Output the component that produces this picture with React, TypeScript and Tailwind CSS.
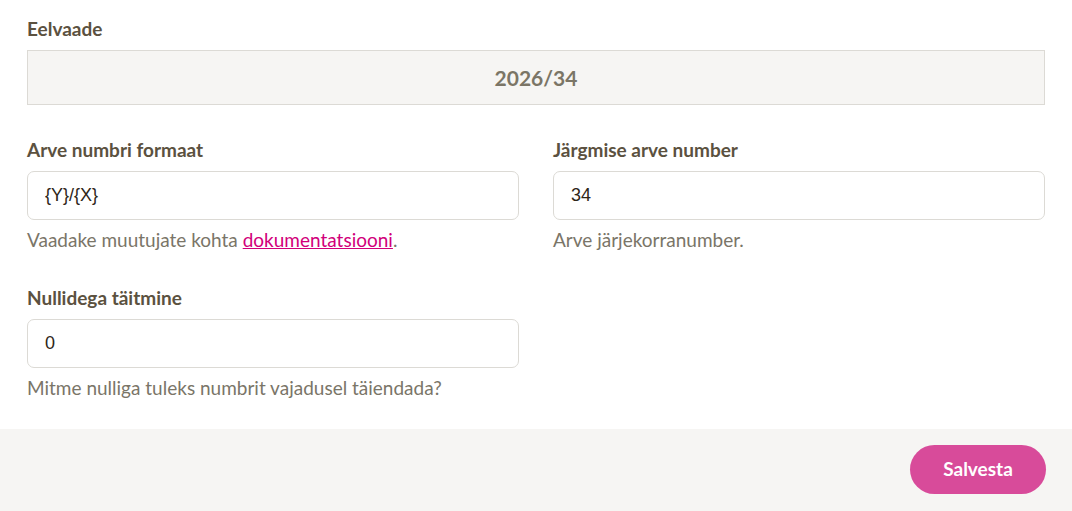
import React from "react";

type FieldProps = {
  label: string;
  value: string;
  help: React.ReactNode;
};

function Field({ label, value, help }: FieldProps) {
  return (
    <div className="flex flex-col">
      <label className="text-[19px] leading-[24px] font-bold text-[#5b5140] mb-[9px]">{label}</label>
      <input
        defaultValue={value}
        className="h-[49px] w-full rounded-[7px] border border-[#dcdad5] bg-white px-[17px] text-[18px] text-[#2e2618] outline-none [font-family:'Liberation_Sans',Arial,sans-serif]"
      />
      <p className="mt-[8px] text-[19px] leading-[24px] text-[#7a7568]">{help}</p>
    </div>
  );
}

export default function App() {
  return (
    <div className="min-h-[511px] bg-white flex flex-col [font-family:Lato,'Liberation_Sans',sans-serif]">
      <div className="px-[27px] pt-[17px] pb-[29px]">
        <div className="text-[19px] leading-[24px] font-bold text-[#5b5140] mb-[9px]">Eelvaade</div>
        <div className="h-[55px] flex items-center justify-center bg-[#f6f5f3] border border-[#dcdad5] text-[21px] font-bold text-[#7b7566]">
          2026/34
        </div>

        <div className="grid grid-cols-2 gap-x-[34px] gap-y-[34px] mt-[33px]">
          <Field
            label="Arve numbri formaat"
            value="{Y}/{X}"
            help={
              <>
                Vaadake muutujate kohta{" "}
                <a href="#" className="text-[#d1007a] underline">
                  dokumentatsiooni
                </a>
                .
              </>
            }
          />
          <Field label="Järgmise arve number" value="34" help="Arve järjekorranumber." />
          <Field label="Nullidega täitmine" value="0" help="Mitme nulliga tuleks numbrit vajadusel täiendada?" />
        </div>
      </div>

      <div className="flex-1 bg-[#f6f5f3] flex justify-end items-start px-[26px] pt-[16px]">
        <button className="h-[49px] w-[136px] rounded-full bg-[#d84b9a] text-white text-[19px] font-bold">
          Salvesta
        </button>
      </div>
    </div>
  );
}
